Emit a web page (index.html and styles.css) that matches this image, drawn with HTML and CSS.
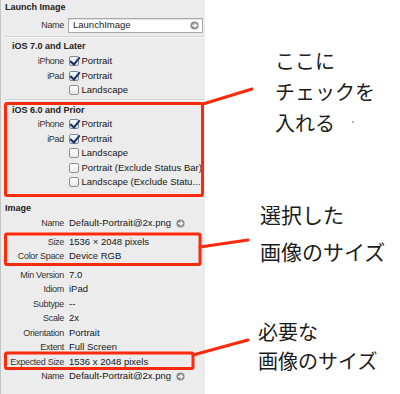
FILE: index.html
```html
<!DOCTYPE html>
<html lang="ja">
  <head>
    <meta charset="UTF-8" />
    <meta name="viewport" content="width=device-width, initial-scale=1.0" />
    <title>Launch Image</title>
    <link rel="stylesheet" href="styles.css">
  </head>
  <body>
    <div class="page">
      <div class="inspector">
        <h2 class="sec-title">Launch Image</h2>
        <div class="row name-row">
          <span class="label">Name</span>
          <div class="field">LaunchImage
            <svg class="go" viewBox="0 0 10 10"><circle cx="5" cy="5" r="4.5" fill="#8d8d8d"/><path d="M2.3 5h4.6M5 2.8 7.2 5 5 7.2" stroke="#fff" stroke-width="1.4" fill="none"/></svg>
          </div>
        </div>
        <div class="sep"></div>

        <div class="group g7">
          <h3 class="group-title">iOS 7.0 and Later</h3>
          <div class="row"><span class="label">iPhone</span><span class="value"><span class="box on"></span>Portrait</span></div>
          <div class="row"><span class="label">iPad</span><span class="value"><span class="box on"></span>Portrait</span></div>
          <div class="row"><span class="label"></span><span class="value"><span class="box"></span>Landscape</span></div>
        </div>
        <div class="sep sep2"></div>

        <div class="group g6">
          <h3 class="group-title">iOS 6.0 and Prior</h3>
          <div class="row"><span class="label">iPhone</span><span class="value"><span class="box on"></span>Portrait</span></div>
          <div class="row"><span class="label">iPad</span><span class="value"><span class="box on"></span>Portrait</span></div>
          <div class="row"><span class="label"></span><span class="value"><span class="box"></span>Landscape</span></div>
          <div class="row"><span class="label"></span><span class="value"><span class="box"></span>Portrait (Exclude Status Bar)</span></div>
          <div class="row"><span class="label"></span><span class="value"><span class="box"></span>Landscape (Exclude Statu...</span></div>
        </div>

        <h2 class="sec-title img-title">Image</h2>
        <div class="row"><span class="label">Name</span><span class="value">Default-Portrait@2x.png
          <svg class="go link" viewBox="0 0 10 10"><circle cx="5" cy="5" r="4.5" fill="#8d8d8d"/><path d="M2.3 5h4.6M5 2.8 7.2 5 5 7.2" stroke="#fff" stroke-width="1.4" fill="none"/></svg></span></div>
        <div class="block">
          <div class="row"><span class="label">Size</span><span class="value">1536 × 2048 pixels</span></div>
          <div class="row"><span class="label">Color Space</span><span class="value">Device RGB</span></div>
        </div>
        <div class="block">
          <div class="row"><span class="label">Min Version</span><span class="value">7.0</span></div>
          <div class="row"><span class="label">Idiom</span><span class="value">iPad</span></div>
          <div class="row"><span class="label">Subtype</span><span class="value">--</span></div>
          <div class="row"><span class="label">Scale</span><span class="value">2x</span></div>
          <div class="row"><span class="label">Orientation</span><span class="value">Portrait</span></div>
          <div class="row"><span class="label">Extent</span><span class="value">Full Screen</span></div>
          <div class="row"><span class="label">Expected Size</span><span class="value">1536 x 2048 pixels</span></div>
          <div class="row"><span class="label">Name</span><span class="value">Default-Portrait@2x.png
            <svg class="go link" viewBox="0 0 10 10"><circle cx="5" cy="5" r="4.5" fill="#8d8d8d"/><path d="M2.3 5h4.6M5 2.8 7.2 5 5 7.2" stroke="#fff" stroke-width="1.4" fill="none"/></svg></span></div>
        </div>
      </div>

      <div class="notes">
        <p class="note note1">ここに<br>チェックを<br>入れる<span class="speck"></span></p>
        <p class="note note2">選択した<br>画像のサイズ</p>
        <p class="note note3">必要な<br>画像のサイズ</p>
      </div>

      <!-- annotation marks -->
      <svg class="marks" viewBox="0 0 400 394">
        <g fill="none" stroke="#fc2a0c" stroke-width="3" stroke-linecap="round" stroke-linejoin="round">
          <rect x="5.5" y="103.5" width="197" height="92" rx="1.5"/>
          <rect x="5.5" y="234" width="194.5" height="30.5" rx="1.5"/>
          <rect x="5.5" y="353" width="187.5" height="15.5" rx="1.5"/>
          <path d="M203 104 252 89"/>
          <path d="M200 247 248 240"/>
          <path d="M193 355 248 340"/>
        </g>
      </svg>
    </div>
  </body>
</html>
```

FILE: styles.css
```css
*{
    margin: 0;
    padding: 0;
    box-sizing: border-box;
}
body{
    width: 400px;
    height: 394px;
    overflow: hidden;
    background: #fff;
    font-family: "Liberation Sans", Arial, sans-serif;
}
.page{
    position: relative;
    display: flex;
    height: 394px;
}
.inspector{
    width: 205px;
    background: #ececec;
    box-shadow: inset 1px 0 #c4c4c4;
    font-size: 9.5px;
    color: #1c1c1c;
}
.sec-title{
    height: 14px;
    line-height: 14px;
    padding-left: 5px;
    font-size: 9px;
    font-weight: bold;
    color: #222;
}
.group-title{
    height: 14px;
    line-height: 14px;
    padding-left: 12px;
    font-size: 9px;
    font-weight: bold;
    color: #222;
}
.row{
    display: grid;
    grid-template-columns: 64px 1fr;
    column-gap: 5px;
    height: 14.5px;
    line-height: 14.5px;
    white-space: nowrap;
}
.label{
    text-align: right;
    font-size: 9px;
    letter-spacing: -0.3px;
    color: #333;
}
.value{
    display: flex;
    align-items: center;
    color: #161616;
}
.name-row{
    margin-top: 4px;
    height: 15px;
    align-items: center;
}
.field{
    margin-left: -1px;
    margin-right: 2px;
    height: 15px;
    padding: 0 3px 0 4px;
    display: flex;
    align-items: center;
    justify-content: space-between;
    background: #fff;
    border: 1px solid #a9a9a9;
    box-shadow: inset 0 1px 1px rgba(0,0,0,.12);
    font-size: 9.5px;
}
.go{
    width: 9px;
    height: 9px;
}
.link{
    margin-left: 5px;
}
.sep{
    margin: 3px 1px 1px 5px;
    height: 2px;
    border-top: 1px solid #d4d4d4;
    border-bottom: 1px solid #f7f7f7;
}
.g7 .row:first-of-type{
    margin-top: 1px;
}
.sep2{
    margin-top: 1.5px;
    margin-bottom: 2px;
}
.box{
    position: relative;
    flex: none;
    width: 10px;
    height: 10px;
    margin-right: 2.5px;
    border: 1px solid #8f8f8f;
    border-radius: 2px;
    background: linear-gradient(#fff, #e9e9e9);
}
.box.on{
    background: linear-gradient(#f4f8fd, #d8e2ef);
    border-color: #7f8a99;
}
.box.on::after{
    content: "";
    position: absolute;
    left: 2px;
    top: -2px;
    width: 4px;
    height: 8px;
    border-right: 2px solid #1f2f63;
    border-bottom: 2px solid #1f2f63;
    transform: rotate(40deg);
}
.img-title{
    margin-top: 11.5px;
    margin-bottom: 1px;
}
.block{
    margin-top: 4px;
}
.notes{
    flex: 1;
    display: flex;
    flex-direction: column;
}
.note{
    font-family: "Noto Sans CJK JP", sans-serif;
    font-size: 20px;
    color: #1c1c1c;
    white-space: nowrap;
}
.note1{
    margin: 45px 0 0 70px;
    line-height: 31px;
}
.note2{
    margin: 58px 0 0 55px;
    line-height: 37px;
    font-size: 21px;
}
.note3{
    margin: 47px 0 0 53px;
    line-height: 29px;
}
.speck{
    display: inline-block;
    width: 2px;
    height: 2px;
    margin-left: 17px;
    vertical-align: 8px;
    border-radius: 50%;
    background: #999;
}
.marks{
    position: absolute;
    left: 0;
    top: 0;
    width: 400px;
    height: 394px;
    pointer-events: none;
}
```
